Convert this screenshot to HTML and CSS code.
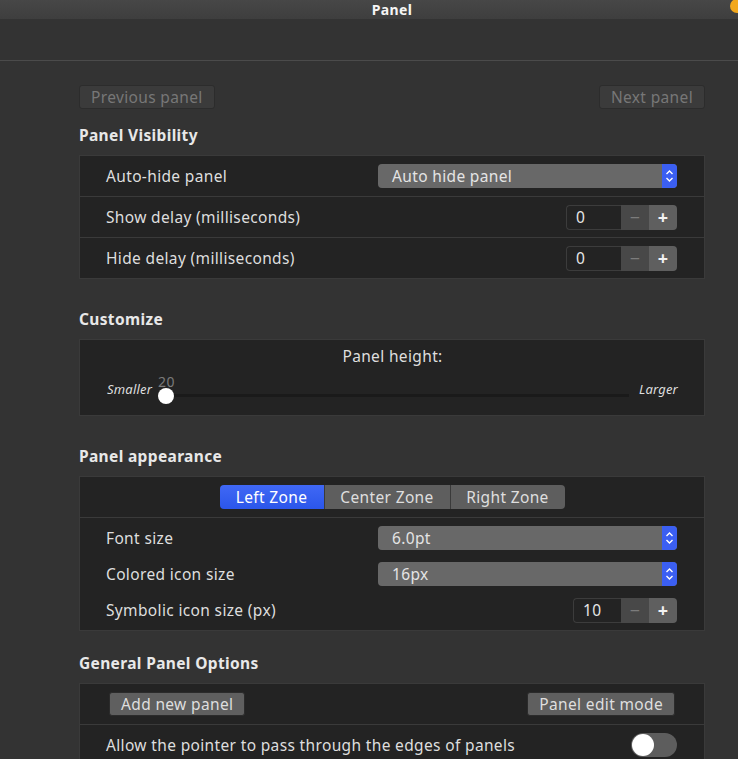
FILE: index.html
```html
<!DOCTYPE html>
<html>
<head>
<meta charset="utf-8">
<link rel="stylesheet" href="styles.css">
</head>
<body>
<div class="titlebar"><span class="title">Panel</span><span class="dot"></span></div>
<div class="toolbar"></div>
<main class="content">
  <div class="nav">
    <button class="btn disabled">Previous panel</button>
    <button class="btn disabled">Next panel</button>
  </div>

  <h2 class="heading h-first">Panel Visibility</h2>
  <section class="box">
    <div class="row row-combo">
      <span class="label">Auto-hide panel</span>
      <div class="combo"><span class="combo-text">Auto hide panel</span><span class="combo-arrow"><svg width="9" height="16" viewBox="0 0 9 16"><path d="M1.5 6 L4.5 3 L7.5 6 M1.5 10 L4.5 13 L7.5 10" fill="none" stroke="#fff" stroke-width="1.4"/></svg></span></div>
    </div>
    <div class="row row-spin">
      <span class="label">Show delay (milliseconds)</span>
      <div class="spin"><span class="spin-entry">0</span><span class="spin-btn minus">−</span><span class="spin-btn plus">+</span></div>
    </div>
    <div class="row row-spin">
      <span class="label">Hide delay (milliseconds)</span>
      <div class="spin"><span class="spin-entry">0</span><span class="spin-btn minus">−</span><span class="spin-btn plus">+</span></div>
    </div>
  </section>

  <h2 class="heading h-second">Customize</h2>
  <section class="box slider-box">
    <div class="slider-title">Panel height:</div>
    <div class="slider-row">
      <span class="slider-end">Smaller</span>
      <div class="slider">
        <span class="slider-track"></span>
        <span class="slider-knob"></span>
        <span class="slider-value">20</span>
      </div>
      <span class="slider-end">Larger</span>
    </div>
  </section>

  <h2 class="heading h-second">Panel appearance</h2>
  <section class="box">
    <div class="zones-row">
      <div class="zones">
        <span class="zone active">Left Zone</span>
        <span class="zone center">Center Zone</span>
        <span class="zone last">Right Zone</span>
      </div>
    </div>
    <div class="group">
      <div class="grow row-combo">
        <span class="label">Font size</span>
        <div class="combo"><span class="combo-text">6.0pt</span><span class="combo-arrow"><svg width="9" height="16" viewBox="0 0 9 16"><path d="M1.5 6 L4.5 3 L7.5 6 M1.5 10 L4.5 13 L7.5 10" fill="none" stroke="#fff" stroke-width="1.4"/></svg></span></div>
      </div>
      <div class="grow row-combo">
        <span class="label">Colored icon size</span>
        <div class="combo"><span class="combo-text">16px</span><span class="combo-arrow"><svg width="9" height="16" viewBox="0 0 9 16"><path d="M1.5 6 L4.5 3 L7.5 6 M1.5 10 L4.5 13 L7.5 10" fill="none" stroke="#fff" stroke-width="1.4"/></svg></span></div>
      </div>
      <div class="grow row-spin">
        <span class="label">Symbolic icon size (px)</span>
        <div class="spin"><span class="spin-entry narrow">10</span><span class="spin-btn minus">−</span><span class="spin-btn plus">+</span></div>
      </div>
    </div>
  </section>

  <h2 class="heading h-third">General Panel Options</h2>
  <section class="box">
    <div class="row buttons-row">
      <button class="btn">Add new panel</button>
      <button class="btn">Panel edit mode</button>
    </div>
    <div class="row row-spin">
      <span class="label">Allow the pointer to pass through the edges of panels</span>
      <span class="toggle"><span class="toggle-knob"></span></span>
    </div>
  </section>
</main>
</body>
</html>
```

FILE: styles.css
```css
* { box-sizing: border-box; }
html, body {
  margin: 0;
  padding: 0;
  background: #333333;
  height: 759px;
  overflow: hidden;
}
body {
  font-family: "Noto Sans", "DejaVu Sans", sans-serif;
  font-size: 15.5px;
  letter-spacing: 0.35px;
  color: #dcdcdc;
  width: 738px;
}
.titlebar {
  height: 19px;
  background: linear-gradient(#474747, #3e3e3e);
  display: flex;
  align-items: center;
  justify-content: center;
  padding-left: 46px;
  position: relative;
  overflow: hidden;
}
.title {
  font-weight: bold;
  font-size: 14px;
  color: #f5f5f5;
  line-height: 17px;
  margin-top: -1px;
}
.dot {
  position: absolute;
  right: -6px;
  top: -1px;
  width: 14px;
  height: 14px;
  border-radius: 50%;
  background: #f2a81d;
}
.toolbar {
  height: 42px;
  background: #333333;
  border-bottom: 1px solid #4b4b4b;
}
.content {
  padding: 24px 33px 0 79px;
}
.nav {
  display: flex;
  justify-content: space-between;
  height: 24px;
}
.btn {
  font-family: inherit;
  font-size: 15.5px;
  letter-spacing: 0.35px;
  height: 24px;
  padding: 0 11px;
  border: 1px solid #2b2b2b;
  border-radius: 3px;
  background: #5f5f5f;
  color: #dedede;
  line-height: 20px;
}
.btn.disabled {
  background: #3b3b3b;
  color: #777777;
  border-color: #2c2c2c;
}
.heading {
  margin: 0;
  font-size: 15.5px;
  font-weight: bold;
  color: #e8e8e8;
  line-height: 20px;
  margin-bottom: 10px;
}
.h-first { margin-top: 16px; }
.h-second { margin-top: 30px; }
.h-third { margin-top: 22px; }
.box {
  background: #232323;
  border: 1px solid #3a3a3a;
}
.row {
  height: 41px;
  display: flex;
  align-items: center;
  justify-content: space-between;
  padding: 0 27px 0 26px;
  border-top: 1px solid #3a3a3a;
}
.row:first-child { border-top: none; height: 40px; }
.row-combo {
  display: grid;
  grid-template-columns: 1fr 299px;
  align-items: center;
}
.label {
  color: #dedede;
  line-height: 20px;
}
.combo {
  height: 24px;
  background: #686868;
  border-radius: 4px;
  display: flex;
  align-items: stretch;
  overflow: hidden;
}
.combo-text {
  flex: 1;
  padding-left: 14px;
  line-height: 24px;
  color: #e4e4e4;
}
.combo-arrow {
  width: 15px;
  background: #3b5ff2;
  display: flex;
  align-items: center;
  justify-content: center;
}
.spin {
  display: flex;
  height: 25px;
}
.spin-entry {
  width: 55px;
  border: 1px solid #3c3c3c;
  border-right: none;
  border-radius: 4px 0 0 4px;
  background: #232323;
  padding-left: 9px;
  line-height: 23px;
  color: #e6e6e6;
}
.spin-entry.narrow { width: 48px; }
.spin-btn {
  width: 28px;
  display: flex;
  align-items: center;
  justify-content: center;
  font-size: 18px;
  line-height: 1;
}
.minus { background: #484848; color: #7c7c7c; }
.plus { background: #5f5f5f; color: #f2f2f2; border-radius: 0 4px 4px 0; font-weight: bold; }
.slider-box {
  height: 77px;
  padding: 6px 26px 0 27px;
}
.slider-title {
  text-align: center;
  line-height: 20px;
  color: #dedede;
}
.slider-row {
  display: flex;
  align-items: flex-start;
  margin-top: 15px;
}
.slider-end {
  font-style: italic;
  font-size: 13px;
  letter-spacing: 0.2px;
  color: #dedede;
  line-height: 16px;
}
.slider {
  flex: 1;
  position: relative;
  height: 30px;
  margin: 0 10px 0 6px;
}
.slider-track {
  position: absolute;
  left: 6px;
  right: 0;
  top: 13px;
  height: 3px;
  background: #1a1a1a;
}
.slider-knob {
  position: absolute;
  left: 0;
  top: 7px;
  width: 16px;
  height: 16px;
  border-radius: 50%;
  background: #ffffff;
}
.slider-value {
  position: absolute;
  left: 0;
  top: -9px;
  font-size: 14px;
  color: #7a7a7a;
}
.zones-row {
  height: 41px;
  display: flex;
  align-items: center;
  justify-content: center;
  border-bottom: 1px solid #3a3a3a;
}
.zones {
  display: flex;
  height: 24px;
}
.zone {
  background: #5e5e5e;
  color: #dedede;
  line-height: 24px;
  text-align: center;
  border-left: 1px solid #3a3a3a;
}
.zone.active {
  background: linear-gradient(#4068f5, #2b56ea);
  color: #ffffff;
  border-left: none;
  border-radius: 4px 0 0 4px;
  width: 104px;
}
.zone.center { width: 126px; }
.zone.last { width: 115px; border-radius: 0 4px 4px 0; }
.group {
  padding: 8px 27px 8px 26px;
  display: flex;
  flex-direction: column;
  gap: 12px;
}
.grow {
  height: 24px;
  display: flex;
  align-items: center;
  justify-content: space-between;
}
.grow.row-combo { display: grid; }
.buttons-row {
  padding: 0 29px 0 29px;
}
.toggle {
  width: 46px;
  height: 24px;
  border-radius: 12px;
  background: #5d5d5d;
  display: flex;
  align-items: center;
  padding-left: 1px;
}
.toggle-knob {
  width: 22px;
  height: 22px;
  border-radius: 50%;
  background: #ffffff;
}
```
